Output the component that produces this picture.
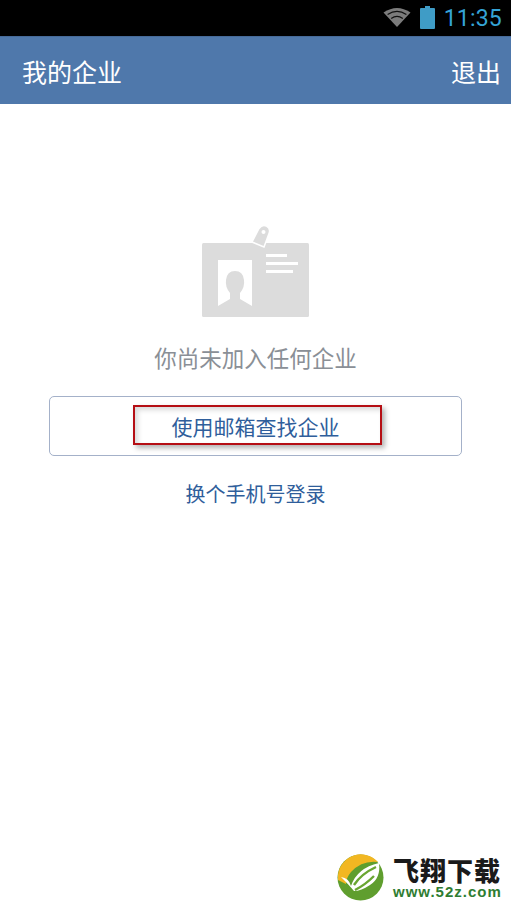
<script lang="ts">
	const cjk = 'x';
</script>

<div class="screen">
	<div class="statusbar">
		<svg class="wifi" width="28" height="22" viewBox="0 0 28 22">
			<path d="M14 21 L0.5 6.5 Q14 -2.5 27.5 6.5 Z" fill="#7c7c7c" />
			<path d="M4.6 8.6 Q14 2.2 23.4 8.6" fill="none" stroke="#111" stroke-width="1.2" />
			<path d="M8.2 12.4 Q14 8.2 19.8 12.4" fill="none" stroke="#111" stroke-width="1.2" />
		</svg>
		<svg class="battery" width="15" height="23" viewBox="0 0 15 23">
			<path d="M5 0 H10 V2 H14 Q15 2 15 3 V22 Q15 23 14 23 H1 Q0 23 0 22 V3 Q0 2 1 2 H5 Z" fill="#3f9cc6" />
		</svg>
		<span class="clock">11:35</span>
	</div>

	<header class="appbar">
		<span>我的企业</span>
		<span>退出</span>
	</header>

	<main class="content">
		<svg class="card" width="107" height="92" viewBox="0 0 107 92">
			<rect x="0" y="18" width="107" height="74" rx="1.5" fill="#dcdcdc" />
			<path d="M50 17 L57 3.5 Q60 -1 64.5 1 Q69 3.5 67 8.5 L62 22 Z" fill="#dcdcdc" stroke="#fff" stroke-width="1.5" />
			<circle cx="61.5" cy="7" r="2" fill="#fff" />
			<path d="M16 35 H50 V81 L38 74 V68 Q43 62 42 55 Q41 46 33 46 Q25 46 24 55 Q23 62 28 68 V74 L16 81 Z" fill="#fff" />
			<rect x="64" y="29" width="21" height="3" fill="#fff" />
			<rect x="64" y="43" width="0" height="0" fill="#fff" />
			<rect x="64" y="37" width="32" height="3" fill="#fff" />
			<rect x="64" y="45" width="27" height="3" fill="#fff" />
		</svg>
		<p class="empty">你尚未加入任何企业</p>
		<div class="find">
			<span>使用邮箱查找企业</span>
			<div class="mark"></div>
		</div>
		<a class="switch" href="#top">换个手机号登录</a>
	</main>

	<div class="watermark">
		<svg width="47" height="47" viewBox="0 0 47 47">
			<circle cx="23.5" cy="23.5" r="23" fill="#5f9e2e" />
			<path d="M1 21 A23 23 0 0 1 41 8 Q25 6 14 18 Q9 24 9 30 L1 26 Z" fill="#f2b722" />
			<path d="M4 23 Q12 24 14 32 Q20 14 42 9 Q44 24 33 31 Q24 37 17 37 Q12 31 4 23 Z" fill="#fff" />
			<path d="M17 31 Q24 20 39 13 M18 36 Q28 31 37 22" fill="none" stroke="#6aa632" stroke-width="2.4" />
		</svg>
		<div class="brand">
			<strong>飞翔下载</strong>
			<span>www.52z.com</span>
		</div>
	</div>
</div>

<style>
	:global(body) {
		margin: 0;
		background: #fff;
	}

	.screen {
		position: relative;
		width: 511px;
		height: 910px;
		overflow: hidden;
		font-family: "Noto Sans CJK SC", "Liberation Sans", sans-serif;
	}

	.statusbar {
		height: 36px;
		background: #000;
		display: flex;
		align-items: center;
		justify-content: flex-end;
		padding-right: 9px;
		box-sizing: border-box;
	}

	.wifi {
		margin-right: 9px;
		margin-top: -2px;
	}

	.battery {
		margin-right: 9px;
		margin-top: -2px;
	}

	.clock {
		font-family: Roboto, sans-serif;
		font-size: 23px;
		color: #35a4d6;
		letter-spacing: 0.2px;
	}

	.appbar {
		height: 68px;
		background: #4f78ab;
		border-top: 1px solid #466a98;
		box-sizing: border-box;
		display: flex;
		align-items: center;
		justify-content: space-between;
		padding: 0 10px 0 22px;
		color: #fff;
		font-size: 25px;
	}

	.content {
		display: flex;
		flex-direction: column;
		align-items: center;
		padding-top: 121px;
	}

	.card {
		display: block;
		margin-left: 0;
	}

	.empty {
		margin: 24px 0 0;
		font-size: 22.5px;
		line-height: 32px;
		color: #8a8f96;
	}

	.find {
		position: relative;
		width: 413px;
		height: 60px;
		margin-top: 23px;
		box-sizing: border-box;
		border: 1px solid #a4b1c9;
		border-radius: 5px;
		display: flex;
		align-items: center;
		justify-content: center;
		color: #2f5e9b;
		font-size: 21px;
	}

	.mark {
		position: absolute;
		left: 83px;
		top: 8px;
		width: 249px;
		height: 40px;
		box-sizing: border-box;
		border: 2px solid #b50e14;
		box-shadow: 3px 3px 5px rgba(0, 0, 0, 0.3), inset 3px 3px 5px rgba(0, 0, 0, 0.15);
	}

	.switch {
		margin-top: 23px;
		font-size: 20px;
		line-height: 30px;
		color: #2f5e9b;
		text-decoration: none;
	}

	.watermark {
		position: absolute;
		left: 337px;
		top: 854px;
		display: flex;
		gap: 9px;
		align-items: center;
	}

	.brand {
		display: flex;
		flex-direction: column;
		width: 116px;
	}

	.brand strong {
		font-size: 26px;
		line-height: 28px;
		color: #1a1a1a;
		font-weight: 900;
		letter-spacing: 1px;
	}

	.brand span {
		font-family: "Liberation Sans", sans-serif;
		font-weight: 700;
		font-size: 15px;
		line-height: 16px;
		letter-spacing: 1px;
		color: #2f7d32;
		white-space: nowrap;
	}
</style>
